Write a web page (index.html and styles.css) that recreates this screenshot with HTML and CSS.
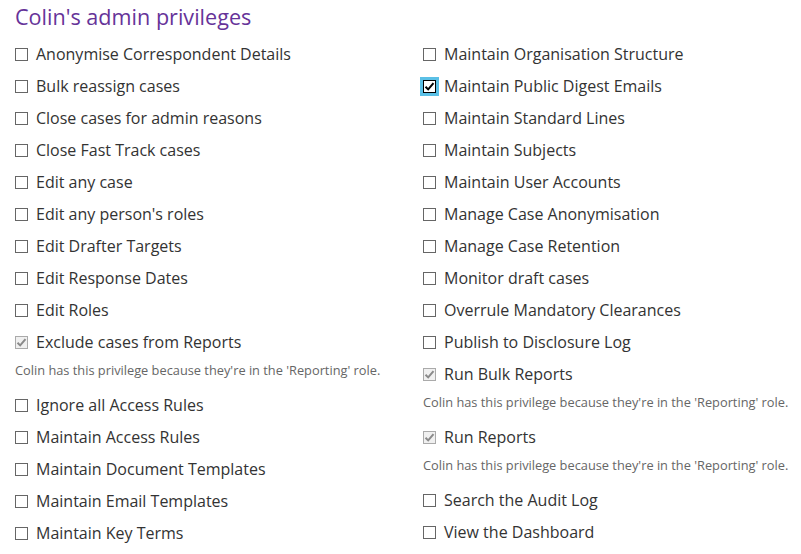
FILE: index.html
```html
<!DOCTYPE html>
<html>
<head>
<meta charset="utf-8">
<link rel="stylesheet" href="styles.css">
</head>
<body>
<h1 class="title">Colin's admin privileges</h1>
<div class="cols">
  <div class="col">
    <div class="item"><span class="box"></span><span class="lbl">Anonymise Correspondent Details</span></div>
    <div class="item"><span class="box"></span><span class="lbl">Bulk reassign cases</span></div>
    <div class="item"><span class="box"></span><span class="lbl">Close cases for admin reasons</span></div>
    <div class="item"><span class="box"></span><span class="lbl">Close Fast Track cases</span></div>
    <div class="item"><span class="box"></span><span class="lbl">Edit any case</span></div>
    <div class="item"><span class="box"></span><span class="lbl">Edit any person's roles</span></div>
    <div class="item"><span class="box"></span><span class="lbl">Edit Drafter Targets</span></div>
    <div class="item"><span class="box"></span><span class="lbl">Edit Response Dates</span></div>
    <div class="item"><span class="box"></span><span class="lbl">Edit Roles</span></div>
    <div class="item"><span class="box box-disabled"><svg viewBox="0 0 13 13" class="chk"><path d="M2.5 6.8 L5.2 9.4 L10.5 3.2" /></svg></span><span class="lbl">Exclude cases from Reports</span></div>
    <div class="help">Colin has this privilege because they're in the 'Reporting' role.</div>
    <div class="item"><span class="box"></span><span class="lbl">Ignore all Access Rules</span></div>
    <div class="item"><span class="box"></span><span class="lbl">Maintain Access Rules</span></div>
    <div class="item"><span class="box"></span><span class="lbl">Maintain Document Templates</span></div>
    <div class="item"><span class="box"></span><span class="lbl">Maintain Email Templates</span></div>
    <div class="item"><span class="box"></span><span class="lbl">Maintain Key Terms</span></div>
  </div>
  <div class="col">
    <div class="item"><span class="box"></span><span class="lbl">Maintain Organisation Structure</span></div>
    <div class="item"><span class="box box-focus"><svg viewBox="0 0 13 13" class="chk"><path d="M2.5 6.8 L5.2 9.4 L10.5 3.2" /></svg></span><span class="lbl">Maintain Public Digest Emails</span></div>
    <div class="item"><span class="box"></span><span class="lbl">Maintain Standard Lines</span></div>
    <div class="item"><span class="box"></span><span class="lbl">Maintain Subjects</span></div>
    <div class="item"><span class="box"></span><span class="lbl">Maintain User Accounts</span></div>
    <div class="item"><span class="box"></span><span class="lbl">Manage Case Anonymisation</span></div>
    <div class="item"><span class="box"></span><span class="lbl">Manage Case Retention</span></div>
    <div class="item"><span class="box"></span><span class="lbl">Monitor draft cases</span></div>
    <div class="item"><span class="box"></span><span class="lbl">Overrule Mandatory Clearances</span></div>
    <div class="item"><span class="box"></span><span class="lbl">Publish to Disclosure Log</span></div>
    <div class="item"><span class="box box-disabled"><svg viewBox="0 0 13 13" class="chk"><path d="M2.5 6.8 L5.2 9.4 L10.5 3.2" /></svg></span><span class="lbl">Run Bulk Reports</span></div>
    <div class="help">Colin has this privilege because they're in the 'Reporting' role.</div>
    <div class="item"><span class="box box-disabled"><svg viewBox="0 0 13 13" class="chk"><path d="M2.5 6.8 L5.2 9.4 L10.5 3.2" /></svg></span><span class="lbl">Run Reports</span></div>
    <div class="help">Colin has this privilege because they're in the 'Reporting' role.</div>
    <div class="item"><span class="box"></span><span class="lbl">Search the Audit Log</span></div>
    <div class="item"><span class="box"></span><span class="lbl">View the Dashboard</span></div>
  </div>
</div>
</body>
</html>
```

FILE: styles.css
```css
html, body {
  margin: 0;
  padding: 0;
  background: #fff;
}
body {
  font-family: "Open Sans", "Liberation Sans", sans-serif;
  color: #333;
  padding-left: 15px;
}
.title {
  font-size: 21.6px;
  font-weight: 400;
  color: #663399;
  line-height: 30px;
  margin: 2px 0 6px 0;
}
.cols {
  display: grid;
  grid-template-columns: 408px 1fr;
}
.item {
  height: 32px;
  display: flex;
  align-items: center;
  gap: 8px;
  font-size: 16px;
}
.box {
  width: 11px;
  height: 11px;
  border: 1px solid #666;
  background: #fff;
  flex: none;
  position: relative;
}
.chk {
  position: absolute;
  left: -1px;
  top: -1px;
  width: 13px;
  height: 13px;
  fill: none;
  stroke-width: 2;
}
.box-disabled {
  border-color: #aaa;
  background: #f0f0f0;
}
.box-disabled .chk path {
  stroke: #8a8a8a;
}
.box-focus {
  border-color: #000;
  outline: 3px solid #5bc0e6;
}
.box-focus .chk path {
  stroke: #000;
}
.lbl {
  line-height: 22px;
}
.help {
  font-size: 12.8px;
  color: #666;
  line-height: 17px;
  padding: 4px 0 10px 0;
}
```
